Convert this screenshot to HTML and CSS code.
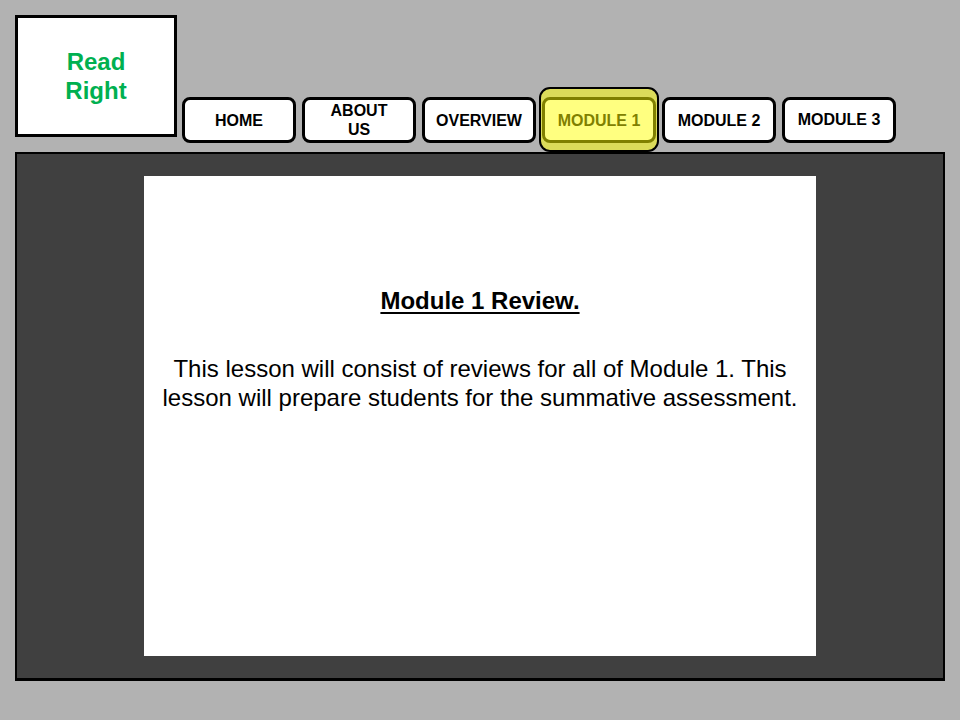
FILE: index.html
```html
<!DOCTYPE html>
<html lang="en">
<head>
        <meta charset="UTF-8">
        <meta name="viewport" content="width=device-width, initial-scale=1.0">
        <title>Read Right - Module 1</title>
        <link rel="stylesheet" href="styles.css">
</head>
<body>
        <div class="page">
                <div class="header">
                        <div class="logo">Read<br>Right</div>
                        <div class="nav">
                                <a class="nav-btn" href="#">HOME</a>
                                <a class="nav-btn" href="#">ABOUT<br>US</a>
                                <a class="nav-btn" href="#">OVERVIEW</a>
                                <div class="nav-active">
                                        <a class="nav-btn" href="#">MODULE 1</a>
                                </div>
                                <a class="nav-btn" href="#">MODULE 2</a>
                                <a class="nav-btn nav-up" href="#">MODULE 3</a>
                        </div>
                </div>

                <div class="panel">
                        <div class="content">
                                <h1>Module 1 Review.</h1>
                                <p>This lesson will consist of reviews for all of Module 1. This<br>lesson will prepare students for the summative assessment.</p>
                        </div>
                </div>
        </div>
</body>
</html>
```

FILE: styles.css
```css
*{
        margin: 0;
        padding: 0;
        box-sizing: border-box;
}
body{
        background-color: #b2b2b2;
        font-family: "Liberation Sans", Arial, sans-serif;
        color: #000;
}
.page{
        padding: 15px 15px 0 15px;
}
.header{
        display: flex;
        align-items: flex-start;
        height: 137px;
}
.logo{
        width: 162px;
        height: 122px;
        border: 3px solid #000;
        background-color: #fff;
        color: #00b050;
        font-weight: bold;
        font-size: 24px;
        line-height: 29px;
        display: flex;
        align-items: center;
        justify-content: center;
        text-align: center;
}
.nav{
        display: flex;
        align-items: flex-start;
        gap: 6px;
        margin-top: 82px;
        margin-left: 5px;
        position: relative;
        z-index: 2;
}
.nav-btn{
        width: 114px;
        height: 46px;
        border: 3px solid #000;
        border-radius: 8px;
        background-color: #fff;
        color: #000;
        text-decoration: none;
        font-weight: bold;
        font-size: 16px;
        line-height: 19px;
        display: flex;
        align-items: center;
        justify-content: center;
        text-align: center;
}
.nav-up{
        padding-bottom: 2px;
}
.nav-active{
        margin: -10px -3px -9px -3px;
        padding: 8px 1px 7px 1px;
        border: 2px solid #000;
        border-radius: 11px;
        background-color: #dcdc5a;
}
.nav-active .nav-btn{
        background-color: #ffff80;
        border-color: #808000;
        color: #808000;
}
.panel{
        width: 930px;
        height: 529px;
        border: 2px solid #000;
        border-bottom-width: 3px;
        background-color: #404040;
        padding: 22px 0;
}
.content{
        width: 672px;
        height: 480px;
        margin: 0 auto;
        background-color: #fff;
        text-align: center;
        padding-top: 110px;
}
.content h1{
        font-size: 24px;
        line-height: 29px;
        font-weight: bold;
        text-decoration: underline;
        text-decoration-thickness: 2px;
        text-underline-offset: 3px;
}
.content p{
        margin-top: 39px;
        font-size: 24px;
        line-height: 29px;
}
```
